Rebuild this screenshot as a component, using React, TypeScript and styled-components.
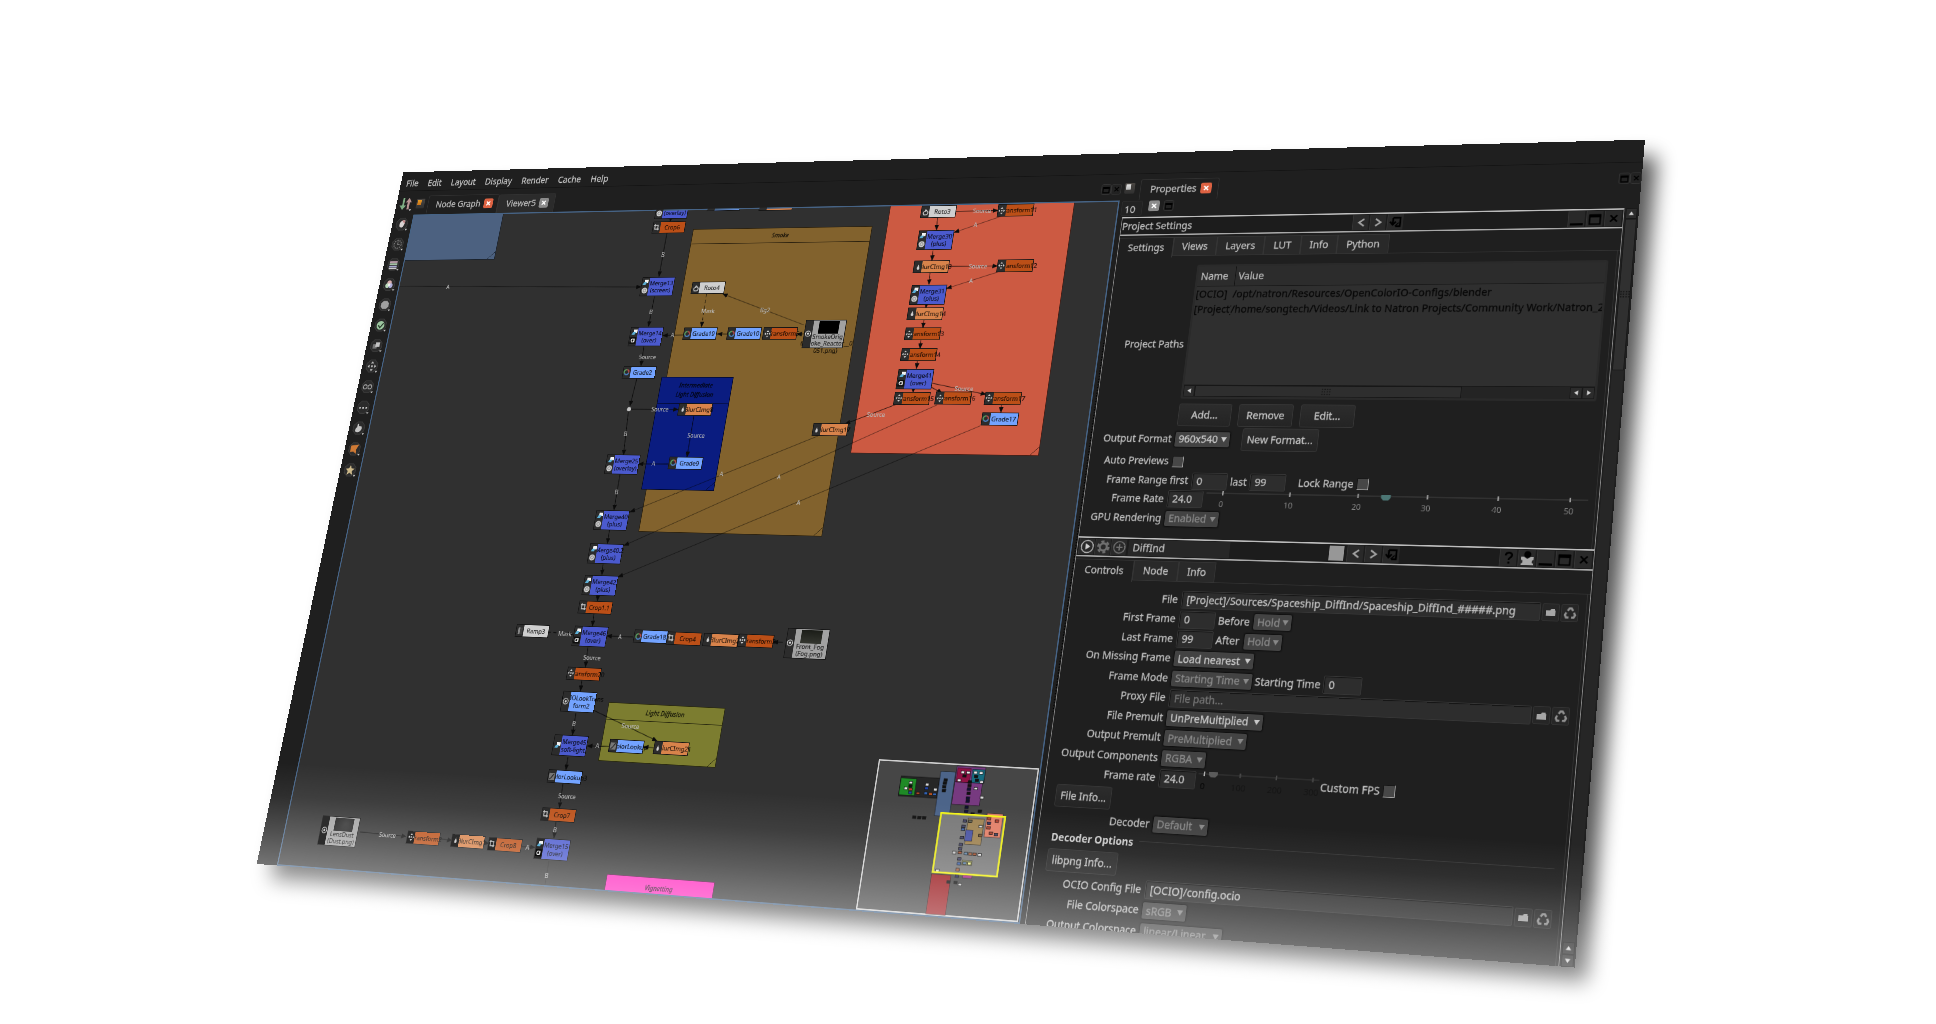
import React from "react";
import styled, { createGlobalStyle, css } from "styled-components";

/* ---------- camera: the flat 1920x1080 window seen in perspective ---------- */
const W = 1920;
const H = 1080;
const [P0, P1, P2, P3] = [
  [403.3, 172.3],
  [1645, 139.7],
  [1575, 967.7],
  [256.7, 864],
];
const d1 = [P1[0] - P2[0], P1[1] - P2[1]];
const d2 = [P3[0] - P2[0], P3[1] - P2[1]];
const sm = [P0[0] - P1[0] + P2[0] - P3[0], P0[1] - P1[1] + P2[1] - P3[1]];
const det0 = d1[0] * d2[1] - d2[0] * d1[1];
const g = (sm[0] * d2[1] - d2[0] * sm[1]) / det0;
const h = (d1[0] * sm[1] - sm[0] * d1[1]) / det0;
const a = P1[0] - P0[0] + g * P1[0];
const b = P3[0] - P0[0] + h * P3[0];
const c = P0[0];
const d = P1[1] - P0[1] + g * P1[1];
const e = P3[1] - P0[1] + h * P3[1];
const f = P0[1];
const MATRIX = `matrix3d(${a / W},${d / W},0,${g / W},${b / H},${e / H},0,${h / H},0,0,1,0,${c},${f},0,1)`;

const GX = 35;
const GY = 71;

/* page point -> point on the node graph canvas */
const flat = (x: number, y: number): [number, number] => {
  const A = a - g * x;
  const B = b - h * x;
  const D = d - g * y;
  const E = e - h * y;
  const p = x - c;
  const q = y - f;
  const k = A * E - B * D;
  return [((p * E - B * q) / k) * W - GX, ((A * q - p * D) / k) * H - GY];
};

const Global = createGlobalStyle`
  html, body { margin: 0; padding: 0; background: #fff; overflow: hidden; }
  body { width: 1936px; height: 1024px; }
  * { box-sizing: border-box; }
`;

const Page = styled.main`
  position: relative;
  width: 1936px;
  height: 1024px;
  overflow: hidden;
  background: #fff;
`;

const ShadowBlur = styled.div`
  position: absolute;
  inset: 0;
  filter: blur(10px);
  opacity: 0.66;
`;
const ShadowShape = styled.div`
  width: 1936px;
  height: 1024px;
  background: #000;
  clip-path: polygon(417px 190px, 1657px 156px, 1587px 983px, 270px 880px);
`;
const ShadowFog = styled.div`
  position: absolute;
  inset: 0;
  background: linear-gradient(184.5deg, rgba(255, 255, 255, 0) 78%, rgba(255, 255, 255, 0.42) 86%);
`;

const Window = styled.div`
  position: absolute;
  left: 0;
  top: 0;
  width: ${W}px;
  height: ${H}px;
  transform-origin: 0 0;
  overflow: hidden;
  display: flex;
  flex-direction: column;
  background: #1f1f1f;
  color: #bdbdbd;
  font: 14px/18px "Noto Sans", sans-serif;
  -webkit-text-stroke: 0.3px;
  white-space: nowrap;
`;

const Fog = styled.div`
  position: absolute;
  left: 0;
  right: 0;
  bottom: 0;
  height: 150px;
  pointer-events: none;
  background: linear-gradient(
    rgba(255, 255, 255, 0),
    rgba(255, 255, 255, 0.07) 33%,
    rgba(255, 255, 255, 0.22) 68%,
    rgba(255, 255, 255, 0.38)
  );
`;

const MenuBar = styled.nav`
  flex: none;
  height: 32px;
  display: flex;
  align-items: center;
  gap: 16.8px;
  padding: 6px 10px 0;
  border-bottom: 1px solid #141414;
  color: #c4c4c4;
`;

const Body = styled.div`
  flex: 1;
  min-height: 0;
  display: flex;
`;

const ToolColumn = styled.div`
  flex: none;
  width: 35px;
  padding-top: 5px;
  display: flex;
  flex-direction: column;
  align-items: center;
`;
const ToolCell = styled.div`
  height: 33px;
  width: 30px;
  display: flex;
  align-items: center;
  justify-content: center;
`;

const GraphPane = styled.section`
  flex: none;
  width: 1161px;
  display: flex;
  flex-direction: column;
`;
const TabStrip = styled.div`
  flex: none;
  height: 39px;
  display: flex;
  align-items: flex-end;
`;
const PinBox = styled.div<{ $warm?: boolean }>`
  width: 15px;
  height: 16px;
  margin: 0 6px 10px 1px;
  border-radius: 2px;
  background:
    linear-gradient(${(p) => (p.$warm ? "#e79a20, #c9741c" : "#e6e6e6, #b5b5b5")}) 2px 2px / 7px 8px no-repeat,
    linear-gradient(#4a4642, #303030);
`;
const PaneTab = styled.div<{ $on?: boolean; $w: number }>`
  width: ${(p) => p.$w}px;
  height: ${(p) => (p.$on ? 31 : 30)}px;
  padding: 0 8px 2px 14px;
  display: flex;
  align-items: center;
  gap: 6px;
  border: 1.5px solid #313131;
  border-bottom: 0;
  border-radius: 3px 3px 0 0;
  background: ${(p) => (p.$on ? "#1f1f1f" : "#2b2b2b")};
`;
const CloseBox = styled.span<{ $hot?: boolean }>`
  width: 16px;
  height: 16px;
  border-radius: 3px;
  display: grid;
  place-items: center;
  background: ${(p) => (p.$hot ? "#dd6242" : "#8b8b8b")};
`;
const Spacer = styled.div<{ $w?: number }>`
  ${(p) => (p.$w ? `flex: none; width: ${p.$w}px;` : "flex: 1;")}
`;
const TinyButton = styled.span`
  width: 15px;
  height: 16px;
  margin-bottom: 9px;
  display: grid;
  place-items: center;
  border: 1px solid #333;
  border-radius: 3px;
  background: #222;
`;

const Canvas = styled.div`
  position: relative;
  flex: 1;
  min-height: 0;
  overflow: hidden;
  background: #303030;
`;
const CanvasFrame = styled.div`
  position: absolute;
  inset: 0;
  border: 2px solid #466385;
`;

/* ---------- node graph ---------- */
const BackdropBox = styled.div<{ $c: string }>`
  position: absolute;
  background: ${(p) => p.$c};
  border: 1px solid rgba(0, 0, 0, 0.65);
`;
const BackdropHead = styled.div`
  display: flex;
  align-items: center;
  justify-content: center;
  text-align: center;
  border-bottom: 1px solid rgba(0, 0, 0, 0.65);
  color: rgba(0, 0, 0, 0.8);
  font: italic 9.5px/14px "Noto Sans", sans-serif;
  white-space: pre;
`;
const Fold = styled.svg`
  position: absolute;
  right: 0;
  bottom: 0;
`;

const NodeBox = styled.div<{ $h: number; $w: number; $c: string }>`
  position: absolute;
  width: ${(p) => p.$w}px;
  height: ${(p) => p.$h}px;
  display: flex;
  border: 1px solid #151515;
  background: ${(p) => p.$c};
  color: rgba(0, 0, 0, 0.82);
  font: 9.2px/11px "Noto Sans", sans-serif;
  -webkit-text-stroke: 0.15px;
`;
const NodeIcons = styled.div`
  position: relative;
  z-index: 1;
  flex: none;
  width: 12px;
  background: #2c2c2c;
  display: flex;
  flex-direction: column;
  align-items: center;
  justify-content: space-evenly;
`;
const NodeLabel = styled.div`
  flex: 1;
  width: 0;
  display: flex;
  flex-direction: column;
  align-items: center;
  justify-content: center;
  white-space: nowrap;
`;
const ReaderLabel = styled.div`
  flex: 1;
  width: 0;
  padding-top: 1px;
  display: flex;
  flex-direction: column;
  align-items: center;
  line-height: 10.5px;
`;
const Thumb = styled.div<{ $c: string }>`
  flex: none;
  width: 32px;
  height: 19px;
  background: ${(p) => p.$c};
`;
const EdgeLayer = styled.svg`
  position: absolute;
  left: 0;
  top: 0;
  overflow: visible;
`;
const EdgeText = styled.span`
  position: absolute;
  transform: translate(-50%, -50%);
  color: #b9b9b9;
  font: 8.8px/10px "Noto Sans", sans-serif;
  -webkit-text-stroke: 0.15px;
`;

type Kind = "merge" | "grade" | "crop" | "xform" | "blur" | "roto" | "ramp" | "look" | "ocio" | "read";
const COLORS: Record<Kind, string> = {
  merge: "#4b5ace",
  grade: "#73a3ff",
  crop: "#bb4f17",
  xform: "#bb4f17",
  blur: "#d8834b",
  roto: "#cfcfcf",
  ramp: "#cfcfcf",
  look: "#73a3ff",
  ocio: "#73a3ff",
  read: "#a2a2a2",
};

const Glyph = ({ k, sub }: { k: Kind; sub?: string }) => {
  if (k === "merge")
    return (
      <>
        <svg width="9" height="9" viewBox="0 0 9 9">
          <rect x="3" y="0" width="6" height="5" fill="#f2f2f2" />
          <path d="M0 8 L2 4 H7 L5 8Z" fill="#5cb0d8" />
        </svg>
        {sub !== "none" && (
          <svg width="10" height="10" viewBox="0 0 10 10">
            {sub === "(over)" ? (
              <>
                <rect width="10" height="10" fill="#0d0d0d" />
                <circle cx="4.6" cy="5" r="2.4" fill="none" stroke="#eee" strokeWidth="1.4" />
                <path d="M7 2v6" stroke="#eee" strokeWidth="1.2" />
              </>
            ) : (
              <>
                <circle cx="5" cy="5" r="4.6" fill="#cfcfcf" />
                <circle cx="5" cy="5" r="2.3" fill="none" stroke="#777" strokeWidth="1" />
              </>
            )}
          </svg>
        )}
      </>
    );
  return (
    <svg width="11" height="12" viewBox="0 0 11 12">
      {k === "grade" && (
        <g fill="none" strokeWidth="2">
          <path d="M5.5 2.2A3.6 3.6 0 0 1 9 7" stroke="#b04a4a" />
          <path d="M9 7A3.6 3.6 0 0 1 2.3 8" stroke="#4a7fc0" />
          <path d="M2.3 8A3.6 3.6 0 0 1 5.5 2.2" stroke="#5aa060" />
        </g>
      )}
      {k === "crop" && <path d="M3 1v8h7M1 3h7v8" fill="none" stroke="#cfcfcf" strokeWidth="1.3" />}
      {k === "xform" && (
        <path d="M5.5 0.5 7.5 3h-4zM5.5 11.5 7.5 9h-4zM0.5 6 3 4v4zM10.5 6 8 4v4zM4.5 5h2v2h-2z" fill="#cfcfcf" />
      )}
      {k === "blur" && <path d="M5.5 2C6 4.5 7.5 6 7.5 8a2 2 0 0 1-4 0C3.5 6 5 4.5 5.5 2Z" fill="#d0d0d0" />}
      {k === "roto" && (
        <path d="M3 10C1 7 2 5 5 5 4 3 5 1.5 6 3l3 3c1 3-1 5-6 4Z" fill="none" stroke="#d0d0d0" strokeWidth="1.4" />
      )}
      {k === "ramp" && (
        <>
          <rect x="2" y="1" width="3" height="10" fill="#888" />
          <rect x="5" y="1" width="4" height="10" fill="#3f3f3f" />
        </>
      )}
      {k === "look" && (
        <>
          <rect x="1" y="1" width="9" height="10" fill="#777" />
          <path d="M2 10C5 9 6 5 9 2" stroke="#222" fill="none" strokeWidth="1.3" />
        </>
      )}
      {(k === "ocio" || k === "read") && (
        <>
          <circle cx="5.5" cy="6" r="4" fill="none" stroke="#d8d8d8" strokeWidth="1.2" />
          <circle cx="5.5" cy="6" r="1.7" fill="#d8d8d8" />
        </>
      )}
    </svg>
  );
};

type NodeDef = [Kind, number, number, string, string?];
const NODES: NodeDef[] = [
  ["merge", 672, 209.7, "Merge12", "(overlay)"],
  ["crop", 668.7, 227.3, "Crop6"],
  ["merge", 657.3, 286.7, "Merge13", "(screen)"],
  ["merge", 646, 336.3, "Merge14", "(over)"],
  ["grade", 639, 372.3, "Grade2"],
  ["blur", 695.3, 409.3, "BlurCImg8"],
  ["roto", 708.3, 288, "Roto4"],
  ["grade", 700, 333.7, "Grade19"],
  ["grade", 744.3, 333.7, "Grade10"],
  ["xform", 780, 333.7, "Transform5"],
  ["grade", 724, 205, "Grade1"],
  ["blur", 776, 204.3, "BlurCImg5"],
  ["roto", 938.7, 211.7, "Roto3"],
  ["xform", 1015.3, 210.3, "Transform11"],
  ["merge", 935.3, 240.3, "Merge30", "(plus)"],
  ["blur", 931.3, 267, "BlurCImg13"],
  ["xform", 1015, 265.7, "Transform12"],
  ["merge", 928, 294.7, "Merge31", "(plus)"],
  ["blur", 925.3, 313.7, "BlurCImg14"],
  ["xform", 922.3, 334, "Transform13"],
  ["xform", 918.7, 354.3, "Transform14"],
  ["merge", 915, 379, "Merge41", "(over)"],
  ["xform", 912, 398.3, "Transform15"],
  ["xform", 953.3, 398.3, "Transform16"],
  ["xform", 1002.7, 398.3, "Transform17"],
  ["grade", 999.7, 419, "Grade17"],
  ["blur", 830, 429.7, "BlurCImg17"],
  ["merge", 622.3, 464.7, "Merge25", "(overlay)"],
  ["grade", 685.7, 463, "Grade9"],
  ["merge", 611.7, 520, "Merge40", "(plus)"],
  ["merge", 605.3, 554, "Merge40.2", "(plus)"],
  ["merge", 600, 585.3, "Merge42", "(plus)"],
  ["crop", 595.7, 607.3, "Crop1.1"],
  ["merge", 590, 636.3, "Merge46", "(over)"],
  ["grade", 651, 637, "Grade18"],
  ["crop", 684, 638.7, "Crop4"],
  ["blur", 721, 640, "BlurCImg2"],
  ["xform", 755.7, 641, "Transform2"],
  ["ramp", 532.3, 631.3, "Ramp3"],
  ["xform", 583.7, 673.7, "Transform20"],
  ["ocio", 578.3, 702, "OCIOLookTrans", "form2"],
  ["merge", 570, 746, "Merge45", "soft-light"],
  ["look", 564.7, 777, "ColorLookup3"],
  ["crop", 558.3, 815, "Crop7"],
  ["merge", 552, 849.3, "Merge15", "(over)"],
  ["look", 626.3, 746.7, "ColorLookup"],
  ["blur", 671, 748.7, "BlurCImg21"],
  ["xform", 423.3, 838, "Transform2"],
  ["blur", 468, 841.3, "BlurCImg1"],
  ["crop", 504.7, 844.7, "Crop8"],
];

const READERS: [number, number, string, string[]][] = [
  [824.3, 334, "#000", ["SmokeOrig", "(Smoke_Reactor__0", "051.png)"]],
  [806.7, 643.7, "linear-gradient(#1b1d18, #34362f)", ["Front_Fog", "(Fog.png)"]],
  [339, 831.3, "radial-gradient(circle at 60% 40%, #2e2e2e, #141414)", ["LensDust", "(Dust.png)"]],
];

/* x1, y1, x2, y2, label, label x, label y, style */
type EdgeDef = [number, number, number, number, string?, number?, number?, ("dash" | "faint" | "tail")?];
const EDGES: EdgeDef[] = [
  [670.7, 219, 670, 221.5],
  [667, 233, 659, 276.5, "B", 663, 255],
  [398, 286.3, 641, 287, "A", 448, 287.5, "faint"],
  [654.5, 296.5, 648.5, 326.5, "B", 651, 312],
  [644, 346, 641, 366, "Source", 647.5, 357],
  [637, 378, 630, 406],
  [631, 409.3, 678, 409.5, "Source", 660, 409.5],
  [628.5, 411, 623.5, 455, "B", 625.5, 434],
  [694, 415.5, 687, 457, "Source", 696, 436],
  [668, 464, 638.5, 464, "A", 653.5, 464],
  [620, 474.5, 614, 510, "B", 616.5, 492],
  [609.5, 530, 607.5, 543.5],
  [603, 564.5, 602, 575],
  [598, 596, 597.5, 601],
  [594, 613.5, 592.5, 626],
  [548, 632, 572.5, 634.5, "Mask", 565, 634, "dash"],
  [633, 637, 607, 636, "A", 620, 637],
  [783, 642.5, 773, 642],
  [588, 647, 585.5, 667, "Source", 592, 658],
  [582, 680, 580.5, 691],
  [576, 713, 572.5, 735, "B", 574, 724],
  [593, 710, 657, 741, "Source", 630.5, 726.5],
  [610, 746.5, 587.5, 746, "A", 597.5, 746],
  [656, 748, 643.5, 747],
  [568, 757, 566, 770],
  [563, 784, 559.5, 808, "Source", 567, 796.5],
  [556, 822, 554, 838, "B", 555, 830],
  [521.5, 846.5, 535, 847.5, "A", 527.5, 847.5],
  [549, 861, 545, 885, "B", 546.5, 876, "tail"],
  [360, 832, 406, 836.5, "Source", 387.5, 835.5],
  [440, 839, 452, 840.5],
  [484, 843, 489, 843.5],
  [706.5, 294, 701.5, 327, "Mask", 708, 311, "dash"],
  [804, 325, 723, 294, "Bg2", 765, 310.5, "faint"],
  [729, 334, 717.5, 334],
  [683, 335, 663, 335.5, "A", 672.5, 335.5],
  [804, 334, 797, 334],
  [956, 211.3, 998, 210.5, "Source", 982, 211],
  [1002, 216, 954, 232.5, "A", 975.5, 225, "faint"],
  [937.5, 218, 936.5, 230],
  [933, 250.5, 932, 260.5],
  [949, 266.3, 997.5, 266, "Source", 978, 266.5],
  [1001, 271, 946.5, 288.5, "A", 971, 281, "faint"],
  [930, 273, 929, 284.5],
  [926.5, 304, 926, 308],
  [924, 319.5, 923, 328],
  [921, 340, 920, 348.5],
  [917.5, 360.5, 916.5, 368.5],
  [913.5, 389, 913, 392.5],
  [931, 387, 942, 393],
  [931, 383, 986, 394.5, "Source", 964, 389],
  [1001.5, 405, 1001, 412.5],
  [896, 404.5, 845, 424, "Source", 876, 415],
  [980, 426, 618, 577, "A", 798.5, 503, "faint"],
  [937, 405, 624, 545.5, "A", 779, 477, "faint"],
  [818, 436, 630, 512, "A", 721.5, 474.5, "faint"],
];

const Backdrop = ({
  tl,
  br,
  color,
  title,
  head,
}: {
  tl: [number, number];
  br: [number, number];
  color: string;
  title?: string;
  head?: number;
}) => {
  const p = flat(...tl);
  const q = flat(...br);
  return (
    <BackdropBox $c={color} style={{ left: p[0], top: p[1], width: q[0] - p[0], height: q[1] - p[1] }}>
      {title && <BackdropHead style={{ height: head }}>{title}</BackdropHead>}
      <Fold width="12" height="12">
        <path d="M0 12 L12 0" stroke="rgba(0,0,0,.65)" />
      </Fold>
    </BackdropBox>
  );
};

const Graph = () => (
  <>
    <Backdrop tl={[385, 190]} br={[494.7, 259.3]} color="#4c6180" />
    <Backdrop tl={[693.3, 229]} br={[821.7, 536.7]} color="#82622d" title="Smoke" head={23} />
    <Backdrop tl={[661.7, 376.7]} br={[714, 490.7]} color="#0a1c80" title={"Intermediate\nLight Diffusion"} head={40} />
    <Backdrop tl={[893, 190]} br={[1038.6, 456]} color="#cc5a42" />
    <Backdrop tl={[608.7, 702.3]} br={[715.7, 767.7]} color="#7c7d30" title="Light Diffusion" head={24} />
    <Backdrop tl={[607.3, 874]} br={[706, 935]} color="#ff23bd" title="Vignetting" head={28} />
    <EdgeLayer width="1160" height="1008">
      <defs>
        <marker id="tip" viewBox="0 0 10 8" refX="9" refY="4" markerWidth="9" markerHeight="7" orient="auto" markerUnits="userSpaceOnUse">
          <path d="M0 0 L10 4 L0 8Z" fill="#0b0b0b" />
        </marker>
      </defs>
      {EDGES.map(([x1, y1, x2, y2, , , , s], i) => {
        const p = flat(x1, y1);
        const q = flat(x2, y2);
        return (
          <line
            key={i}
            x1={p[0]}
            y1={p[1]}
            x2={q[0]}
            y2={q[1]}
            stroke={s === "faint" ? "rgba(0,0,0,.45)" : s === "tail" ? "rgba(0,0,0,.3)" : "rgba(0,0,0,.75)"}
            strokeWidth={1.1}
            strokeDasharray={s === "dash" ? "5 4" : undefined}
            markerEnd={s === "tail" ? undefined : "url(#tip)"}
          />
        );
      })}
      <circle cx={flat(629, 409.3)[0]} cy={flat(629, 409.3)[1]} r="3.2" fill="#c4c4c4" />
    </EdgeLayer>
    {NODES.map(([k, x, y, t, s], i) => {
      const p = flat(x, y);
      const nh = s ? 30 : 19;
      return (
        <NodeBox key={i} $w={55} $h={nh} $c={COLORS[k]} style={{ left: p[0] - 27.5, top: p[1] - nh / 2 }}>
          <NodeIcons>
            <Glyph k={k} sub={s === "soft-light" ? "none" : s} />
          </NodeIcons>
          <NodeLabel>
            <span>{t}</span>
            {s && <span>{s}</span>}
          </NodeLabel>
        </NodeBox>
      );
    })}
    {READERS.map(([x, y, th, lines], i) => {
      const p = flat(x, y);
      return (
        <NodeBox key={i} $w={65} $h={43} $c="#a2a2a2" style={{ left: p[0] - 32.5, top: p[1] - 21.5 }}>
          <NodeIcons>
            <Glyph k="read" />
          </NodeIcons>
          <ReaderLabel>
            <Thumb $c={th} />
            {lines.map((l) => (
              <span key={l}>{l}</span>
            ))}
          </ReaderLabel>
        </NodeBox>
      );
    })}
    {EDGES.filter((n) => n[4]).map((n, i) => {
      const p = flat(n[5]!, n[6]!);
      return (
        <EdgeText key={i} style={{ left: p[0], top: p[1] }}>
          {n[4]}
        </EdgeText>
      );
    })}
    <MiniMap />
  </>
);

/* mini map shapes: x1, y1, x2, y2 in thirds of a page pixel, offset (840,740) */
const mm = (x: number, y: number) => flat(840 + x / 3, 740 + y / 3);
const MAP: [number, number, number, number, string][] = [
  [184, 108, 290, 175, "#262626"],
  [184, 114, 223, 167, "#1f8a26"],
  [303, 94, 328, 230, "#4c6489"],
  [352, 78, 431, 131, "#773a80"],
  [345, 126, 418, 198, "#773a80"],
  [354, 84, 388, 128, "#8f1245"],
  [399, 88, 431, 130, "#176d80"],
  [275, 402, 316, 526, "#9c1e22"],
];
const MAP_IN: [number, number, number, number, string][] = [
  [385, 235, 422, 316, "#a08555"],
  [378, 270, 395, 304, "#4c56a4"],
  [442, 220, 480, 294, "#e3826b"],
  [367, 361, 395, 377, "#97985c"],
  [369, 405, 395, 416, "#a82c88"],
];
const MAP_DOTS: [number, number, string][] = [
  [213, 128, "#ddd"], [212, 138, "#111"], [198, 145, "#eee"], [212, 148, "#b33"], [211, 158, "#24a"],
  [234, 160, "#a42"], [262, 134, "#ddd"], [260, 145, "#24a"], [258, 160, "#36b"], [272, 162, "#b52"],
  [286, 149, "#ddd"], [284, 163, "#36b"], [317, 120, "#111"], [315, 130, "#111"], [313, 141, "#111"], [312, 152, "#111"],
  [369, 97, "#eee"], [385, 98, "#eee"], [374, 108, "#111"], [358, 121, "#eee"], [407, 98, "#eee"], [424, 99, "#eee"],
  [409, 110, "#111"], [411, 121, "#111"], [425, 126, "#ddd"], [390, 126, "#111"], [389, 137, "#111"], [387, 148, "#113"],
  [386, 160, "#111"], [384, 175, "#113"], [383, 184, "#113"], [408, 146, "#ddd"], [426, 173, "#ddd"], [380, 202, "#113"],
  [379, 214, "#114"], [223, 232, "#111"], [238, 233, "#111"], [253, 234, "#111"], [420, 214, "#111"], [398, 222, "#111"],
  [375, 243, "#446"], [391, 244, "#665"], [371, 259, "#446"], [369, 268, "#46a"], [366, 293, "#446"], [363, 314, "#446"],
  [361, 327, "#446"], [360, 338, "#a53"], [358, 357, "#446"], [357, 371, "#46a"], [353, 389, "#a64"], [351, 409, "#225"],
  [343, 338, "#ccc"], [378, 341, "#68a"], [391, 342, "#a64"], [404, 343, "#a53"], [419, 345, "#ddd"], [422, 260, "#ddd"],
  [448, 236, "#a43"], [447, 250, "#336"], [446, 264, "#a43"], [471, 244, "#b43"], [453, 280, "#a43"], [468, 284, "#446"],
  [292, 392, "#ddd"], [326, 426, "#111"], [347, 428, "#111"], [360, 434, "#ccc"], [421, 287, "#753"], [374, 370, "#68a"],
  [388, 371, "#ee8"],
];
const MapFrame = styled.div`
  position: absolute;
  border: 2.5px solid #cfcfcf;
  background: #464646;
`;
const shape = (s: [number, number, number, number, string], i: number) => {
  const p = mm(s[0], s[1]);
  const q = mm(s[2], s[3]);
  return (
    <rect key={i} x={p[0]} y={p[1]} width={q[0] - p[0]} height={q[1] - p[1]} fill={s[4]} stroke="rgba(0,0,0,.5)" strokeWidth=".8" />
  );
};
const MiniMap = () => {
  const p = mm(117, 58);
  const q = mm(535, 546);
  const y1 = mm(304, 219);
  const y2 = mm(471, 410);
  return (
    <>
      <MapFrame style={{ left: p[0], top: p[1], width: q[0] - p[0], height: q[1] - p[1] }} />
      <EdgeLayer width="1160" height="1008">
        {MAP.map(shape)}
        <rect x={y1[0]} y={y1[1]} width={y2[0] - y1[0]} height={y2[1] - y1[1]} fill="#7a7a7a" />
        {MAP_IN.map(shape)}
        {MAP_DOTS.map(([x, y, k], i) => {
          const m = mm(x, y);
          return <rect key={i} x={m[0] - 2.5} y={m[1] - 1.7} width="5" height="3.4" fill={k} stroke="#111" strokeWidth=".7" />;
        })}
        <rect x={y1[0]} y={y1[1]} width={y2[0] - y1[0]} height={y2[1] - y1[1]} fill="none" stroke="#f3f318" strokeWidth="2.5" />
      </EdgeLayer>
    </>
  );
};

/* ---------- tool column icons ---------- */
const Badge = ({ children }: { children: React.ReactNode }) => (
  <svg width="24" height="24" viewBox="0 0 26 26">
    <path d="M8 2h9l6 6v9l-6 6H8l-6-6V8Z" fill="#2b2b2b" stroke="#434343" />
    {children}
    <path d="M20 21l5 0-2.5 3z" fill="#ccc" />
  </svg>
);
const TOOLS: React.ReactNode[] = [
  <svg width="27" height="25" viewBox="0 0 28 26">
    <path d="M7 2h3.5v13h4L8.5 23 2 15h5z" fill="#7fae84" />
    <path d="M16.5 22V10H13l5.5-8 5.5 8h-3.5v12z" fill="#b79494" />
    <path d="M21 22h5l-2.5 3z" fill="#ccc" />
  </svg>,
  <Badge>
    <path d="M8 14C8 8 12 5 18 6c1 5-1 10-5 13-3-1-5-2-5-5Z" fill="#d9d2d2" />
    <path d="M12 6c3-1 5 0 6 1l-1 5z" fill="#c08080" />
  </Badge>,
  <Badge>
    <circle cx="12.5" cy="13" r="7" fill="none" stroke="#7a7a7a" strokeWidth="2" strokeDasharray="2.5 1.8" />
    <path d="M12.5 8v5h4" stroke="#8a8a8a" fill="none" strokeWidth="1.5" />
  </Badge>,
  <Badge>
    <path d="M5 7h15v3H5z" fill="#c8a8b8" />
    <path d="M5 11h15v3H5z" fill="#a8c8a8" />
    <path d="M5 15h15v3H5z" fill="#a8a8d0" />
    <path d="M5 19h15v2H5z" fill="#ccc" />
  </Badge>,
  <Badge>
    <circle cx="12.5" cy="10" r="4.5" fill="#d8b0b0" />
    <circle cx="9.5" cy="14.5" r="4" fill="#b8d8b8" />
    <circle cx="15.5" cy="14.5" r="4" fill="#b0b0dd" />
    <circle cx="12.5" cy="13" r="2.5" fill="#eee" />
  </Badge>,
  <Badge>
    <path d="M9 6h7l4 4v6l-4 4H9l-4-4v-6Z" fill="#a0a0a0" />
  </Badge>,
  <Badge>
    <circle cx="12.5" cy="13" r="7.5" fill="#9cc7a0" />
    <path d="M8 13l4 4 6-8" stroke="#27382a" fill="none" strokeWidth="2.2" />
  </Badge>,
  <Badge>
    <rect x="6" y="10" width="8" height="8" fill="#777" />
    <rect x="11" y="7" width="8" height="8" fill="#c4c4c4" />
  </Badge>,
  <Badge>
    <path d="M12.5 4l3 4h-6zM12.5 22l3-4h-6zM4 13l4-3v6zM21 13l-4-3v6zM11 11.5h3v3h-3z" fill="#bdbdbd" />
  </Badge>,
  <Badge>
    <circle cx="8" cy="13" r="3.5" fill="none" stroke="#aaa" strokeWidth="1.5" />
    <circle cx="17" cy="13" r="3.5" fill="none" stroke="#aaa" strokeWidth="1.5" />
  </Badge>,
  <Badge>
    <path d="M5 12h3v3H5zM11 12h3v3h-3zM17 12h3v3h-3z" fill="#c8c8c8" />
  </Badge>,
  <Badge>
    <path d="M7 19c-2-5 0-7 2-8V6c2-2 3 0 3 3 4 0 7 1 6 5-1 5-6 7-11 5Z" fill="#c4c4c4" />
  </Badge>,
  <Badge>
    <path d="M5 7l15-2-4 9 1 7-6-4-6 1Z" fill="#cf7a35" />
  </Badge>,
  <Badge>
    <path d="M12.5 4l2.5 6 6 .5-4.5 4 1.5 6.5-5.5-3.5-5.5 3.5 1.5-6.5-4.5-4 6-.5z" fill="#cdb98a" />
  </Badge>,
];

/* ---------- properties ---------- */
const Props = styled.section`
  flex: 1;
  min-width: 0;
  display: flex;
  flex-direction: column;
  padding-left: 4px;
`;
const PropsTools = styled.div`
  flex: none;
  height: 25px;
  padding: 1px 0 0 0;
  display: flex;
  align-items: flex-start;
  gap: 6px;
`;
const CountBox = styled.div`
  width: 31px;
  height: 22px;
  padding: 3px 4px;
  border: 1px solid #2c2c2c;
  border-radius: 2px;
  background: #222;
  margin-right: 3px;
`;
const PropsBody = styled.div`
  flex: 1;
  min-height: 0;
  display: flex;
`;
const PanelStack = styled.div`
  flex: none;
  width: 698px;
  display: flex;
  flex-direction: column;
  overflow: hidden;
`;
const Panel = styled.div<{ $h: number }>`
  flex: none;
  height: ${(p) => p.$h}px;
  display: flex;
  flex-direction: column;
  border: 1.5px solid #8a8a8a;
  border-top-color: #c0c0c0;
  border-bottom: 0;
`;
const TitleBar = styled.div`
  flex: none;
  height: 27px;
  display: flex;
  align-items: center;
  padding: 0 2px 0 1px;
  border-top: 1.5px solid #b8b8b8;
  border-bottom: 2.5px solid #a8a8a8;
  background: #1c1c1c;
`;
const TitleIcon = styled.span<{ $w?: number; $ml?: number }>`
  flex: none;
  width: ${(p) => p.$w ?? 22}px;
  height: 22px;
  margin-left: ${(p) => p.$ml ?? 2}px;
  display: grid;
  place-items: center;
  background: #292929;
  border-left: 1px solid #353535;
`;
const TitleName = styled.div`
  width: 142px;
  height: 22px;
  padding: 2px 6px;
  margin-left: 3px;
  background: #272727;
`;
const Swatch = styled.span`
  flex: none;
  width: 20px;
  height: 20px;
  background: #979797;
`;
const Tabs = styled.div`
  flex: none;
  height: 31px;
  padding-top: 3px;
  display: flex;
  border-bottom: 1.5px solid #313131;
`;
const Tab = styled.div<{ $w: number; $on?: boolean }>`
  width: ${(p) => p.$w}px;
  height: ${(p) => (p.$on ? 30 : 28)}px;
  padding-bottom: 1px;
  display: grid;
  place-items: center;
  border: 1px solid #343434;
  background: ${(p) => (p.$on ? "#1f1f1f" : "#292929")};
  ${(p) =>
    p.$on &&
    css`
      border-bottom: 0;
      border-left: 0;
      padding: 0 0 2px 2px;
    `}
`;
const Form = styled.div`
  flex: 1;
  min-height: 0;
  margin-right: 3px;
  padding: 11px 0 0;
  border-right: 1.5px solid #313131;
`;
const Row = styled.div<{ $h: number }>`
  height: ${(p) => p.$h}px;
  display: flex;
  align-items: center;
`;
const Label = styled.div<{ $w: number }>`
  flex: none;
  width: ${(p) => p.$w}px;
  margin: -1px 5px 0 0;
  text-align: right;
`;
const Text = styled.span<{ $l: number; $r: number }>`
  margin: 0 ${(p) => p.$r}px 0 ${(p) => p.$l}px;
`;
const Field = styled.div<{ $w: number; $dim?: boolean }>`
  flex: none;
  width: ${(p) => p.$w}px;
  height: 24px;
  padding: 2px 6px;
  border: 1px solid #363636;
  border-radius: 2px;
  background: #2d2d2d;
  color: ${(p) => (p.$dim ? "#757575" : "#c0c0c0")};
  box-shadow: inset 1px 1px 1px #151515;
`;
const Combo = styled.div<{ $w: number; $dim?: boolean }>`
  flex: none;
  width: ${(p) => p.$w}px;
  height: 21px;
  padding: 0 4px 0 5px;
  display: flex;
  align-items: center;
  justify-content: space-between;
  border-radius: 2px;
  background: #434343;
  box-shadow: 0 0 2px 1px #0c0c0c;
  color: ${(p) => (p.$dim ? "#888" : "#c8c8c8")};
`;
const Arrow = styled.i`
  border: 4px solid transparent;
  border-top: 7px solid currentColor;
  border-bottom: 0;
`;
const Button = styled.div<{ $w: number; $h?: number }>`
  flex: none;
  width: ${(p) => p.$w}px;
  height: ${(p) => p.$h ?? 32}px;
  display: grid;
  place-items: center;
  border: 1.5px solid #363636;
  border-radius: 3px;
  background: linear-gradient(#2c2c2c, #242424);
  color: #c2c2c2;
`;
const Check = styled.span`
  flex: none;
  width: 16px;
  height: 16px;
  background: #474747;
  border: 1.5px solid #161616;
  border-right-color: #a5a5a5;
  border-bottom-color: #a5a5a5;
`;
const Stack = styled.div`
  display: flex;
  flex-direction: column;
  gap: 7px;
`;
const ButtonRow = styled.div`
  display: flex;
  gap: 10px;
`;
const Table = styled.div`
  width: 563px;
  height: 193px;
  border: 3px solid #2a2a2a;
  border-radius: 3px;
  display: flex;
  flex-direction: column;
  background: #2f2f2f;
  overflow: hidden;
`;
const HeadRow = styled.div`
  flex: none;
  height: 29px;
  display: flex;
  align-items: center;
  border-bottom: 1px solid #191919;
  background: #2c2c2c;
`;
const HeadCell = styled.div<{ $w?: number }>`
  ${(p) => (p.$w ? `width: ${p.$w}px; border-right: 1.5px solid #151515;` : "flex: 1;")}
  height: 100%;
  padding: 5px 4px;
`;
const PathRow = styled.div`
  flex: none;
  height: 22.5px;
  display: flex;
  align-items: center;
  color: #080808;
  letter-spacing: 0.11px;
`;
const PathName = styled.span`
  flex: none;
  width: 53px;
  overflow: hidden;
`;
const HScroll = styled.div`
  flex: none;
  height: 17px;
  margin-top: auto;
  display: flex;
  background: #242424;
  border-top: 1px solid #171717;
`;
const ScrollBtn = styled.span`
  flex: none;
  width: 16px;
  display: grid;
  place-items: center;
  background: #2c2c2c;
  border: 1px solid #191919;
`;
const HHandle = styled.div`
  width: 367px;
  display: grid;
  place-items: center;
  background: #2e2e2e;
  border: 1px solid #171717;
`;
const Grip = styled.i`
  width: 14px;
  height: 10px;
  background: radial-gradient(circle, #161616 0.8px, transparent 1.2px) 0 0 / 3.5px 3.5px;
`;
const VScroll = styled.div`
  flex: none;
  width: 15px;
  margin-left: 2px;
  display: flex;
  flex-direction: column;
  background: #262626;
`;
const VBtn = styled.span`
  flex: none;
  height: 15px;
  display: grid;
  place-items: center;
  background: #2c2c2c;
  border: 1px solid #181818;
`;
const VHandle = styled.div`
  height: 208px;
  display: grid;
  place-items: center;
  background: #303030;
  border: 1px solid #191919;
`;
const SliderSvg = styled.svg`
  flex: none;
  overflow: visible;
`;
const SquareBtn = styled.span`
  flex: none;
  width: 22px;
  height: 23px;
  margin-left: 2px;
  display: grid;
  place-items: center;
  border: 1px solid #333;
  border-radius: 2px;
  background: #262626;
`;
const SectionRow = styled.div`
  height: 24px;
  padding: 0 0 3px 19px;
  display: flex;
  align-items: center;
  gap: 8px;
  font-weight: 700;
  font-size: 13.7px;
  color: #cfcfcf;
  -webkit-text-stroke: 0;
`;
const Rule = styled.span`
  flex: 1;
  height: 1.5px;
  margin: 0 11px 2px 0;
  background: #333;
`;
const Indent = styled.div<{ $h: number }>`
  height: ${(p) => p.$h}px;
  padding-left: 17px;
  display: flex;
  align-items: center;
`;
const SplitGrip = styled.div`
  flex: none;
  width: 3px;
  margin: 180px 0 280px;
  background: radial-gradient(circle, #000 0.8px, transparent 1.2px) 0 0 / 3px 4px;
`;

const X = ({ s = 8, c: col = "#fff", w = 2.2 }: { s?: number; c?: string; w?: number }) => (
  <svg width={s} height={s} viewBox="0 0 8 8">
    <path d="M1 1l6 6M7 1L1 7" stroke={col} strokeWidth={w * (8 / s)} />
  </svg>
);
const Max = ({ s = 11 }: { s?: number }) => (
  <svg width={s} height={s} viewBox="0 0 11 11">
    <path d="M1 2h9v8H1z" fill="none" stroke="#000" strokeWidth="1.3" />
    <path d="M.5 1h10v3H.5z" fill="#000" />
  </svg>
);
const Tri = ({ r = 0 }: { r?: number }) => (
  <svg width="9" height="9" viewBox="0 0 8 8">
    <path d="M1 6l3-4.5 3 4.5z" fill="#d6d6d6" transform={`rotate(${r} 4 4)`} />
  </svg>
);
const Chev = ({ dir }: { dir: "l" | "r" }) => (
  <svg width="12" height="14" viewBox="0 0 12 14">
    <path d={dir === "l" ? "M10 2L3 7l7 5" : "M2 2l7 5-7 5"} fill="none" stroke="#a2a2a2" strokeWidth="2.4" />
  </svg>
);
const Restore = () => (
  <svg width="17" height="17" viewBox="0 0 17 17">
    <path d="M5 2h10v12H9M5 2v9M1 7.5L5 12l4-4.5" fill="none" stroke="#000" strokeWidth="2.4" />
    <path d="M8 14l5-5" stroke="#000" strokeWidth="1.5" />
  </svg>
);
const WindowIcons = () => (
  <>
    <TitleIcon>
      <svg width="17" height="17">
        <path d="M0 15.5h17" stroke="#000" strokeWidth="3" />
      </svg>
    </TitleIcon>
    <TitleIcon>
      <Max s={17} />
    </TitleIcon>
    <TitleIcon>
      <X s={12} c="#000" w={2.4} />
    </TitleIcon>
  </>
);
const Folder = () => (
  <svg width="14" height="12" viewBox="0 0 14 12">
    <path d="M1 4h5l1.5-2H12v2h1v7H1z" fill="#a6a6a6" />
  </svg>
);
const Recycle = () => (
  <svg width="17" height="17" viewBox="0 0 16 16">
    <path d="M5 5.500L7 2.500h2.500L11.500 5.500M12.500 7.500l1.500 3-1.500 3H9.500M6.500 13.500H3.500l-1.500-3 1.500-3" fill="none" stroke="#8f8f8f" strokeWidth="2.6" />
  </svg>
);
const FileButtons = () => (
  <>
    <SquareBtn>
      <Folder />
    </SquareBtn>
    <SquareBtn>
      <Recycle />
    </SquareBtn>
  </>
);

const SLABEL = 114;
const CLABEL = 152;
const Select = ({ w, dim, children }: { w: number; dim?: boolean; children: React.ReactNode }) => (
  <Combo $w={w} $dim={dim}>
    {children}
    <Arrow />
  </Combo>
);

const FrameSlider = () => (
  <SliderSvg width="510" height="26" viewBox="0 0 510 26">
    <path d="M0 4h510" stroke="#383838" strokeWidth="1.5" />
    {[0, 10, 20, 30, 40, 50].map((n) => (
      <g key={n}>
        <path d={`M${23 + n * 9.28} 1v6`} stroke="#999" strokeWidth="2" />
        <text x={22 + n * 9.28} y="23" fontSize="11" fill="#858585" textAnchor="middle">
          {n}
        </text>
      </g>
    ))}
    <path d="M239.5 2h13v4l-3 3.5h-7l-3-3.5z" fill="#4c7674" />
  </SliderSvg>
);
const RateSlider = () => (
  <SliderSvg width="162" height="30" viewBox="0 0 162 30">
    <path d="M0 6h162" stroke="#333" strokeWidth="1.5" />
    {["0", "100", "200", "300"].map((n, i) => (
      <g key={n}>
        <path d={`M${8 + i * 48.5} 3v6`} stroke={i ? "#4a4a4a" : "#b0b0b0"} strokeWidth="2" />
        <text x={7 + i * 48.5} y="26" fontSize="11.5" fill={i ? "#151515" : "#050505"} textAnchor="middle">
          {n}
        </text>
      </g>
    ))}
    <path d="M14 3h12v4l-3 3h-6l-3-3z" fill="#5b5b5b" />
  </SliderSvg>
);

const ProjectSettings = () => (
  <Panel $h={461}>
    <TitleBar>
      <span>Project Settings</span>
      <Spacer />
      <TitleIcon>
        <Chev dir="l" />
      </TitleIcon>
      <TitleIcon>
        <Chev dir="r" />
      </TitleIcon>
      <TitleIcon>
        <Restore />
      </TitleIcon>
      <Spacer $w={220} />
      <WindowIcons />
    </TitleBar>
    <Tabs>
      <Tab $w={80} $on>
        Settings
      </Tab>
      <Tab $w={63}>Views</Tab>
      <Tab $w={68}>Layers</Tab>
      <Tab $w={52}>LUT</Tab>
      <Tab $w={51}>Info</Tab>
      <Tab $w={72}>Python</Tab>
    </Tabs>
    <Form>
      <Row $h={235}>
        <Label $w={SLABEL}>Project Paths</Label>
        <Stack>
          <Table>
            <HeadRow>
              <HeadCell $w={54}>Name</HeadCell>
              <HeadCell>Value</HeadCell>
            </HeadRow>
            <PathRow>
              <PathName>[OCIO]</PathName>
              <span>/opt/natron/Resources/OpenColorIO-Configs/blender</span>
            </PathRow>
            <PathRow>
              <PathName>[Project]</PathName>
              <span>/home/songtech/Videos/Link to Natron Projects/Community Work/Natron_2</span>
            </PathRow>
            <HScroll>
              <ScrollBtn>
                <Tri r={-90} />
              </ScrollBtn>
              <HHandle>
                <Grip />
              </HHandle>
              <Spacer />
              <ScrollBtn>
                <Tri r={-90} />
              </ScrollBtn>
              <ScrollBtn>
                <Tri r={90} />
              </ScrollBtn>
            </HScroll>
          </Table>
          <ButtonRow>
            <Button $w={75}>Add...</Button>
            <Button $w={76}>Remove</Button>
            <Button $w={75}>Edit...</Button>
          </ButtonRow>
        </Stack>
      </Row>
      <Row $h={34}>
        <Label $w={SLABEL}>Output Format</Label>
        <Select w={77}>960x540</Select>
        <Spacer $w={17} />
        <Button $w={106}>New Format...</Button>
      </Row>
      <Row $h={29}>
        <Label $w={SLABEL}>Auto Previews</Label>
        <Check />
      </Row>
      <Row $h={25}>
        <Label $w={SLABEL + 31}>Frame Range first</Label>
        <Field $w={50}>0</Field>
        <Text $l={4} $r={4}>
          last
        </Text>
        <Field $w={50}>99</Field>
        <Text $l={17} $r={4}>
          Lock Range
        </Text>
        <Check />
      </Row>
      <Row $h={26}>
        <Label $w={SLABEL}>Frame Rate</Label>
        <Field $w={50}>24.0</Field>
        <Spacer $w={4} />
        <FrameSlider />
      </Row>
      <Row $h={28}>
        <Label $w={SLABEL}>GPU Rendering</Label>
        <Select w={75} dim>
          Enabled
        </Select>
      </Row>
    </Form>
  </Panel>
);

const DiffInd = () => (
  <Panel $h={600}>
    <TitleBar>
      <TitleIcon $ml={1}>
        <svg width="20" height="20" viewBox="0 0 20 20">
          <circle cx="10" cy="10" r="8.5" fill="none" stroke="#b5b5b5" strokeWidth="1.6" />
          <path d="M7.5 5.5v9l7-4.5z" fill="#cfcfcf" />
        </svg>
      </TitleIcon>
      <TitleIcon $ml={1}>
        <svg width="20" height="20" viewBox="0 0 20 20">
          <circle cx="10" cy="10" r="5" fill="none" stroke="#6f6f6f" strokeWidth="3" />
          <circle cx="10" cy="10" r="7.6" fill="none" stroke="#6f6f6f" strokeWidth="2.8" strokeDasharray="4.4 3.558" />
        </svg>
      </TitleIcon>
      <TitleIcon $ml={1}>
        <svg width="20" height="20" viewBox="0 0 20 20">
          <circle cx="10" cy="10" r="8" fill="none" stroke="#6f6f6f" strokeWidth="1.6" />
          <path d="M10 5.5v9M5.5 10h9" stroke="#6f6f6f" strokeWidth="2" />
        </svg>
      </TitleIcon>
      <TitleName>DiffInd</TitleName>
      <Spacer />
      <Swatch />
      <TitleIcon $ml={4}>
        <Chev dir="l" />
      </TitleIcon>
      <TitleIcon>
        <Chev dir="r" />
      </TitleIcon>
      <TitleIcon>
        <Restore />
      </TitleIcon>
      <Spacer $w={129} />
      <TitleIcon>
        <svg width="14" height="18" viewBox="0 0 14 18">
          <path d="M3 6c0-5 8-5 8-.5C11 9 7 8 7 12" fill="none" stroke="#000" strokeWidth="2.4" />
          <path d="M5.8 14h2.6v2.6H5.8z" fill="#000" />
        </svg>
      </TitleIcon>
      <TitleIcon>
        <svg width="18" height="20" viewBox="0 0 18 20">
          <path d="M1 8h4l4 3 4-3h4v4l-2 1v3l2 1v2H1v-2l2-1v-3l-2-1z" fill="#a9a9a9" />
          <circle cx="9" cy="5" r="4.5" fill="#000" />
        </svg>
      </TitleIcon>
      <WindowIcons />
    </TitleBar>
    <Tabs>
      <Tab $w={84} $on>
        Controls
      </Tab>
      <Tab $w={63}>Node</Tab>
      <Tab $w={52}>Info</Tab>
    </Tabs>
    <Form>
      <Row $h={26.5}>
        <Label $w={CLABEL}>File</Label>
        <Field $w={478}>[Project]/Sources/Spaceship_DiffInd/Spaceship_DiffInd_#####.png</Field>
        <FileButtons />
      </Row>
      <Row $h={26.5}>
        <Label $w={CLABEL}>First Frame</Label>
        <Field $w={50}>0</Field>
        <Text $l={4} $r={5}>
          Before
        </Text>
        <Select w={51} dim>
          Hold
        </Select>
      </Row>
      <Row $h={26.5}>
        <Label $w={CLABEL}>Last Frame</Label>
        <Field $w={50}>99</Field>
        <Text $l={4} $r={6}>
          After
        </Text>
        <Select w={51} dim>
          Hold
        </Select>
      </Row>
      <Row $h={26.5}>
        <Label $w={CLABEL}>On Missing Frame</Label>
        <Select w={109}>Load nearest</Select>
      </Row>
      <Row $h={26.5}>
        <Label $w={CLABEL}>Frame Mode</Label>
        <Select w={110} dim>
          Starting Time
        </Select>
        <Text $l={4} $r={4}>
          Starting Time
        </Text>
        <Field $w={51}>0</Field>
      </Row>
      <Row $h={26.5}>
        <Label $w={CLABEL}>Proxy File</Label>
        <Field $w={478} $dim>
          File path...
        </Field>
        <FileButtons />
      </Row>
      <Row $h={26.5}>
        <Label $w={CLABEL}>File Premult</Label>
        <Select w={131}>UnPreMultiplied</Select>
      </Row>
      <Row $h={26.5}>
        <Label $w={CLABEL}>Output Premult</Label>
        <Select w={112} dim>
          PreMultiplied
        </Select>
      </Row>
      <Row $h={26.5}>
        <Label $w={CLABEL}>Output Components</Label>
        <Select w={60} dim>
          RGBA
        </Select>
      </Row>
      <Row $h={26.5}>
        <Label $w={CLABEL}>Frame rate</Label>
        <Field $w={50}>24.0</Field>
        <Spacer $w={3} />
        <RateSlider />
        <Text $l={2} $r={4}>
          Custom FPS
        </Text>
        <Check />
      </Row>
      <Indent $h={33}>
        <Button $w={78} $h={30}>
          File Info...
        </Button>
      </Indent>
      <Row $h={28}>
        <Label $w={CLABEL}>Decoder</Label>
        <Select w={74} dim>
          Default
        </Select>
      </Row>
      <SectionRow>
        Decoder Options
        <Rule />
      </SectionRow>
      <Indent $h={34}>
        <Button $w={98} $h={30}>
          libpng Info...
        </Button>
      </Indent>
      <Row $h={26.5}>
        <Label $w={CLABEL}>OCIO Config File</Label>
        <Field $w={478}>[OCIO]/config.ocio</Field>
        <FileButtons />
      </Row>
      <Row $h={26.5}>
        <Label $w={CLABEL}>File Colorspace</Label>
        <Select w={59} dim>
          sRGB
        </Select>
      </Row>
      <Row $h={26.5}>
        <Label $w={CLABEL}>Output Colorspace</Label>
        <Select w={110} dim>
          linear/Linear
        </Select>
      </Row>
    </Form>
  </Panel>
);

export default function App() {
  return (
    <Page>
      <Global />
      <ShadowBlur>
        <ShadowShape />
      </ShadowBlur>
      <ShadowFog />
      <Window style={{ transform: MATRIX }}>
        <MenuBar>
          {["File", "Edit", "Layout", "Display", "Render", "Cache", "Help"].map((m) => (
            <span key={m}>{m}</span>
          ))}
        </MenuBar>
        <Body>
          <ToolColumn>
            {TOOLS.map((t, i) => (
              <ToolCell key={i}>{t}</ToolCell>
            ))}
          </ToolColumn>
          <GraphPane>
            <TabStrip>
              <PinBox $warm />
              <PaneTab $w={126} $on>
                Node Graph
                <CloseBox $hot>
                  <X />
                </CloseBox>
              </PaneTab>
              <PaneTab $w={100}>
                Viewer5
                <CloseBox>
                  <X />
                </CloseBox>
              </PaneTab>
              <Spacer />
              <TinyButton>
                <Max />
              </TinyButton>
              <TinyButton>
                <X c="#000" w={1.6} />
              </TinyButton>
            </TabStrip>
            <Canvas>
              <Graph />
              <CanvasFrame />
            </Canvas>
          </GraphPane>
          <Props>
            <TabStrip>
              <PinBox />
              <Spacer $w={2} />
              <PaneTab $w={115} $on>
                Properties
                <CloseBox $hot>
                  <X />
                </CloseBox>
              </PaneTab>
              <Spacer />
              <TinyButton>
                <Max />
              </TinyButton>
              <TinyButton>
                <X c="#000" w={1.6} />
              </TinyButton>
            </TabStrip>
            <PropsTools>
              <CountBox>10</CountBox>
              <CloseBox>
                <X />
              </CloseBox>
              <TinyButton>
                <Max />
              </TinyButton>
            </PropsTools>
            <PropsBody>
              <SplitGrip />
              <PanelStack>
                <ProjectSettings />
                <DiffInd />
              </PanelStack>
              <VScroll>
                <VBtn>
                  <Tri />
                </VBtn>
                <VHandle>
                  <Grip />
                </VHandle>
                <Spacer />
                <VBtn>
                  <Tri />
                </VBtn>
                <VBtn>
                  <Tri r={180} />
                </VBtn>
              </VScroll>
            </PropsBody>
          </Props>
        </Body>
        <Fog />
      </Window>
    </Page>
  );
}
